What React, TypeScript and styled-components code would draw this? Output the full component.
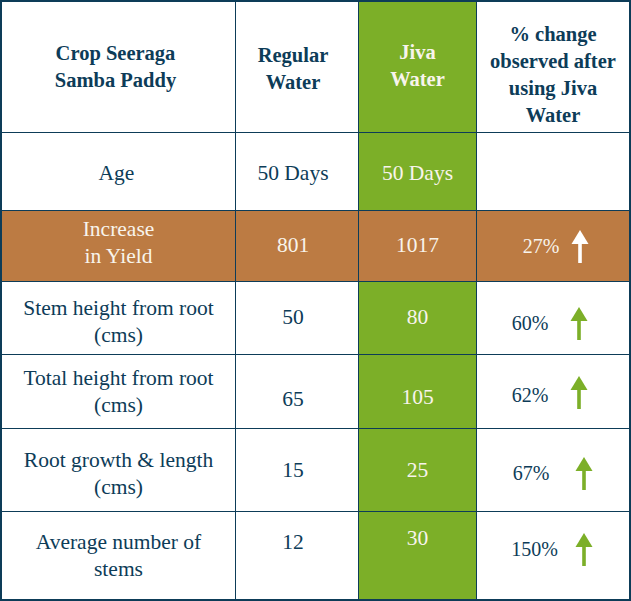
import React from "react";
import styled, { createGlobalStyle } from "styled-components";

const GlobalStyle = createGlobalStyle`
  html, body {
    margin: 0;
    padding: 0;
    background: #ffffff;
  }
  body {
    font-family: "Liberation Serif", "DejaVu Serif", serif;
  }
`;

const NAVY = "#0d3c58";
const GREEN = "#7caf28";
const BROWN = "#bc7b43";

type Tone = "plain" | "green" | "brown";

const Table = styled.div`
  box-sizing: border-box;
  width: 631px;
  height: 601px;
  border: 2px solid ${NAVY};
  background: ${NAVY};
  display: grid;
  grid-template-columns: 233px 122px 117px 152px;
  grid-template-rows: 130px 77px 70px 72px 73px 82px 87px;
  gap: 1px;
`;

const Cell = styled.div<{ $tone?: Tone; $bold?: boolean; $dy?: number; $dx?: number }>`
  box-sizing: border-box;
  display: flex;
  flex-direction: column;
  align-items: center;
  justify-content: center;
  text-align: center;
  background: ${(p) => (p.$tone === "green" ? GREEN : p.$tone === "brown" ? BROWN : "#ffffff")};
  color: ${(p) => (p.$tone && p.$tone !== "plain" ? "#f8f4ec" : NAVY)};
  font-size: ${(p) => (p.$bold ? 20.5 : 21.5)}px;
  font-weight: ${(p) => (p.$bold ? 700 : 400)};
  line-height: 27px;
  padding-top: ${(p) => Math.max(0, (p.$dy ?? 0) * 2)}px;
  padding-bottom: ${(p) => Math.max(0, -(p.$dy ?? 0) * 2)}px;
  padding-left: ${(p) => Math.max(0, (p.$dx ?? 0) * 2)}px;
  padding-right: ${(p) => Math.max(0, -(p.$dx ?? 0) * 2)}px;
`;

const ChangeCell = styled(Cell)<{ $gap: number }>`
  flex-direction: row;
  gap: ${(p) => p.$gap}px;
  font-size: 20px;
`;

const Arrow = ({ color, dy = 0 }: { color: string; dy?: number }) => (
  <svg width="18" height="33" viewBox="0 0 18 33" style={{ transform: `translateY(${dy}px)` }}>
    <polygon points="9,0 17.5,14 0.5,14" fill={color} />
    <rect x="7.2" y="13" width="3.6" height="20" fill={color} />
  </svg>
);

type Row = {
  label: string[];
  labelDy: number;
  regular: string;
  regularDy: number;
  jiva: string;
  jivaDy: number;
  change: string;
  changeDy: number;
  changeDx: number;
  gap: number;
  arrowDy: number;
};

const rows: Row[] = [
  { label: ["Stem height from root", "(cms)"], labelDy: 4, regular: "50", regularDy: -1, jiva: "80", jivaDy: -1, change: "60%", changeDy: 5, changeDx: -3, gap: 22, arrowDy: 0 },
  { label: ["Total height from root", "(cms)"], labelDy: 0, regular: "65", regularDy: 8, jiva: "105", jivaDy: 6, change: "62%", changeDy: 4, changeDx: -3, gap: 22, arrowDy: -3 },
  { label: ["Root growth & length", "(cms)"], labelDy: 4, regular: "15", regularDy: 0, jiva: "25", jivaDy: 0, change: "67%", changeDy: 3, changeDx: 0, gap: 26, arrowDy: 0 },
  { label: ["Average number of", "stems"], labelDy: 0, regular: "12", regularDy: -13, jiva: "30", jivaDy: -17, change: "150%", changeDy: -6, changeDx: -1, gap: 17, arrowDy: 0 },
];

const Lines = ({ lines }: { lines: string[] }) => (
  <>
    {lines.map((l) => (
      <span key={l}>{l}</span>
    ))}
  </>
);

export default function App() {
  return (
    <>
      <GlobalStyle />
      <Table>
        <Cell $bold $dx={-3}>
          <Lines lines={["Crop Seeraga", "Samba Paddy"]} />
        </Cell>
        <Cell $bold $dy={2} $dx={-4}>
          <Lines lines={["Regular", "Water"]} />
        </Cell>
        <Cell $bold $tone="green" $dy={-1}>
          <Lines lines={["Jiva", "Water"]} />
        </Cell>
        <Cell $bold $dy={8}>
          <Lines lines={["% change", "observed after", "using Jiva", "Water"]} />
        </Cell>

        <Cell $dy={2} $dx={-2}>Age</Cell>
        <Cell $dy={2} $dx={-4}>50 Days</Cell>
        <Cell $tone="green" $dy={2}>50 Days</Cell>
        <Cell />

        <Cell $tone="brown" $dy={-3}>
          <Lines lines={["Increase", "in Yield"]} />
        </Cell>
        <Cell $tone="brown" $dy={-1} $dx={-4}>801</Cell>
        <Cell $tone="brown" $dy={-1}>1017</Cell>
        <ChangeCell $tone="brown" $dx={3} $gap={12}>
          <span>27%</span>
          <Arrow color="#ffffff" />
        </ChangeCell>

        {rows.map((r) => (
          <React.Fragment key={r.change}>
            <Cell $dy={r.labelDy}>
              <Lines lines={r.label} />
            </Cell>
            <Cell $dy={r.regularDy} $dx={-4}>{r.regular}</Cell>
            <Cell $tone="green" $dy={r.jivaDy}>{r.jiva}</Cell>
            <ChangeCell $dy={r.changeDy} $dx={r.changeDx} $gap={r.gap}>
              <span>{r.change}</span>
              <Arrow color={GREEN} dy={r.arrowDy} />
            </ChangeCell>
          </React.Fragment>
        ))}
      </Table>
    </>
  );
}
